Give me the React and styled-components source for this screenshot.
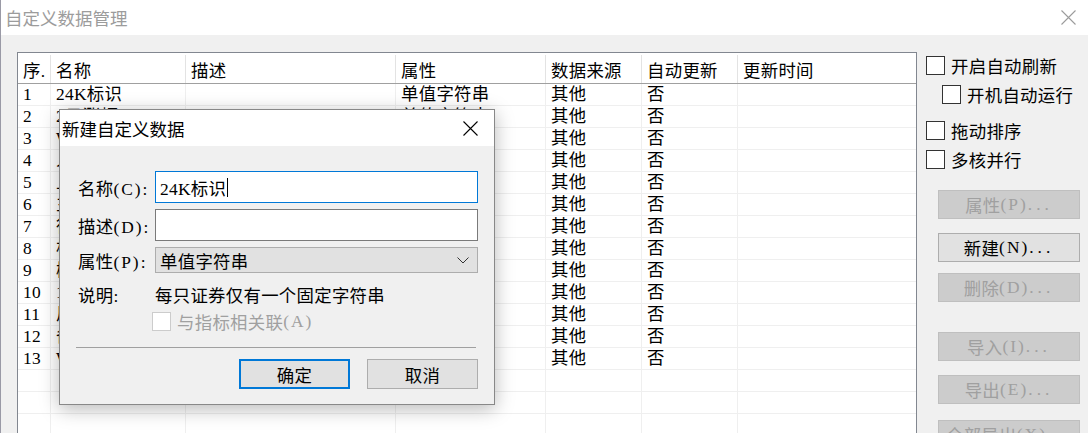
import React from 'react';
import styled, { createGlobalStyle } from 'styled-components';

/* S T Y L E D
* * * * * * */

const GlobalStyle = createGlobalStyle`
    html, body {
        margin: 0;
        padding: 0;
        background: #f0f0f0;
    }

    body {
        font-family: "Liberation Serif", "Noto Sans CJK SC", serif;
        font-size: 17.4px;
        letter-spacing: 0.3px;
        color: #000;
    }
`;

const Window = styled.div`
    position: relative;
    width: 1088px;
    height: 433px;
    overflow: hidden;
    box-sizing: border-box;
    background: #f0f0f0;
    border-left: 1px solid #9a9aa6;
`;

const TitleBar = styled.div`
    display: flex;
    align-items: center;
    justify-content: space-between;
    height: 35px;
    padding: 0 12px 0 4px;
    background: #fff;
    color: #9c9c9c;
    font-family: "Noto Sans CJK SC", sans-serif;
    font-size: 17.5px;
    letter-spacing: 0;
`;

const Main = styled.div`
    display: flex;
    gap: 9px;
    padding: 17px 0 0 16px;
`;

const ListView = styled.div`
    width: 900px;
    height: 400px;
    flex: none;
    box-sizing: border-box;
    border: 1px solid #828790;
    background: #fff;
`;

const columns = '33px 135px 210px 150px 96px 96px 1fr';

const HeaderRow = styled.div`
    display: grid;
    grid-template-columns: ${columns};
    height: 30px;
    border-bottom: 1px solid #a0a0a0;
`;

const HeaderCell = styled.div`
    display: flex;
    align-items: center;
    padding-left: 5px;
    white-space: nowrap;
    overflow: hidden;
    border-right: 1px solid #e3e3e3;
    margin-top: 2px;
    &:last-child { border-right: 0; }
`;

const Row = styled.div`
    display: grid;
    grid-template-columns: ${columns};
    height: 21px;
    border-bottom: 1px solid #efefef;
`;

const Cell = styled.div`
    padding-left: 5px;
    line-height: 21px;
    white-space: nowrap;
    overflow: hidden;
    border-right: 1px solid #efefef;
    &:last-child { border-right: 0; }
`;

// half-width latin marks drawn wider, like the bitmap font of the original
const Punct = styled.span`
    letter-spacing: ${p => p.$wide ? 4 : 2}px;
`;

const SidePanel = styled.div`
    display: flex;
    flex-direction: column;
    flex: 1;
`;

const CheckRow = styled.div`
    display: flex;
    align-items: center;
    height: ${p => p.$height || 26}px;
    margin-top: ${p => p.$top || 0}px;
    padding-left: ${p => p.$indent || 0}px;
    color: ${p => p.$disabled ? '#a0a0a0' : '#000'};
    white-space: nowrap;
`;

const Box = styled.span`
    width: 19px;
    height: 19px;
    flex: none;
    box-sizing: border-box;
    border: 1px solid ${p => p.$disabled ? '#cccccc' : '#333'};
    background: #fff;
    margin-right: 6px;
`;

const SideButton = styled.div`
    display: flex;
    align-items: center;
    justify-content: center;
    width: 142px;
    height: 29px;
    box-sizing: border-box;
    margin: ${p => p.$top}px 0 0 12px;
    border: 1px solid ${p => p.$disabled ? '#bfbfbf' : '#adadad'};
    background: ${p => p.$disabled ? '#cccccc' : '#e1e1e1'};
    color: ${p => p.$disabled ? '#a0a0a0' : '#000'};
    white-space: nowrap;
`;

const Dialog = styled.div`
    position: absolute;
    left: 58px;
    top: 109px;
    width: 436px;
    height: 296px;
    box-sizing: border-box;
    border: 1px solid #888;
    background: #f0f0f0;
    box-shadow: 0 4px 18px rgba(0, 0, 0, 0.28);
`;

const DialogTitle = styled.div`
    display: flex;
    align-items: center;
    justify-content: space-between;
    height: 36px;
    padding: 0 16px 0 2px;
    background: #fff;
    font-family: "Noto Sans CJK SC", sans-serif;
    font-size: 17.5px;
    letter-spacing: 0;
`;

const DialogBody = styled.div`
    display: flex;
    flex-direction: column;
    padding: 25px 16px 0 16px;
`;

const FieldRow = styled.div`
    display: flex;
    align-items: center;
    height: ${p => p.$height}px;
    margin-top: ${p => p.$top || 0}px;
`;

const Label = styled.span`
    width: 77px;
    flex: none;
    padding-left: 2px;
    white-space: nowrap;
`;

const TextBox = styled.div`
    display: flex;
    align-items: center;
    flex: 1;
    height: 100%;
    box-sizing: border-box;
    padding-left: 4px;
    border: 1px solid ${p => p.$focused ? '#0078d7' : '#7a7a7a'};
    background: #fff;
`;

const Caret = styled.span`
    width: 1px;
    height: 19px;
    background: #000;
    margin-left: 1px;
`;

const ComboBox = styled.div`
    display: flex;
    align-items: center;
    justify-content: space-between;
    flex: 1;
    height: 100%;
    box-sizing: border-box;
    padding: 0 8px 0 4px;
    border: 1px solid #adadad;
    background: #e1e1e1;
`;

const CheckIndent = styled.div`
    padding-left: 76px;
`;

const Separator = styled.div`
    height: 1px;
    margin: 15px 2px 0 0;
    background: #a0a0a0;
`;

const ButtonRow = styled.div`
    display: flex;
    justify-content: flex-end;
    gap: 17px;
    margin-top: 11px;
`;

const DialogButton = styled.div`
    display: flex;
    align-items: center;
    justify-content: center;
    width: 111px;
    height: 30px;
    box-sizing: border-box;
    border: ${p => p.$default ? '2px solid #0078d7' : '1px solid #adadad'};
    background: #e1e1e1;
`;

/* D A T A
* * * * */

const headers = ['序.', '名称', '描述', '属性', '数据来源', '自动更新', '更新时间'];

const names = ['24K标识', '2日涨幅', 'WR指标', '人气值', '上市天数', '主力资金', '行业分类',
    '板块标签', '概念题材', '10日均量', '风险提示', '备注', 'WIND代码'];

const rows = names.map((name, i) => [String(i + 1), name, '', '单值字符串', '其他', '否', '']);

const sideButtons = [
    { top: 18, label: '属性', key: 'P', disabled: true },
    { top: 14, label: '新建', key: 'N' },
    { top: 11, label: '删除', key: 'D', disabled: true },
    { top: 30, label: '导入', key: 'I', disabled: true },
    { top: 14, label: '导出', key: 'E', disabled: true },
    { top: 16, label: '全部导出', key: 'X', disabled: true }
];

/* E X P O R T
* * * * * * */

function CloseIcon({ color, size }) {
    return <svg width={size} height={size} viewBox="0 0 15 15">
        <path d="M0.5 0.5 L14.5 14.5 M14.5 0.5 L0.5 14.5" stroke={color} strokeWidth="1.1" fill="none" />
    </svg>;
}

function Mnemonic({ label, hotkey, dots }) {
    return <>
        {label}<Punct>({hotkey})</Punct>{dots ? <Punct $wide>...</Punct> : <Punct>:</Punct>}
    </>;
}

export default function App() {

    return <Window>
        <GlobalStyle />

        <TitleBar>
            <span>自定义数据管理</span>
            <CloseIcon color="#9c9c9c" size={15} />
        </TitleBar>

        <Main>
            <ListView>
                <HeaderRow>
                    {headers.map(h => <HeaderCell key={h}>{h}</HeaderCell>)}
                </HeaderRow>
                {rows.map((r, i) => <Row key={i}>
                    {r.map((c, j) => <Cell key={j}>{c}</Cell>)}
                </Row>)}
                {[0, 1, 2, 3, 4].map(i => <Row key={'e' + i}>
                    {headers.map(h => <Cell key={h} />)}
                </Row>)}
            </ListView>

            <SidePanel>
                <CheckRow><Box />开启自动刷新</CheckRow>
                <CheckRow $top={3} $indent={16}><Box />开机自动运行</CheckRow>
                <CheckRow $top={10}><Box />拖动排序</CheckRow>
                <CheckRow $top={3}><Box />多核并行</CheckRow>
                {sideButtons.map(b => <SideButton key={b.key} $top={b.top} $disabled={b.disabled}>
                    <Mnemonic label={b.label} hotkey={b.key} dots />
                </SideButton>)}
            </SidePanel>
        </Main>

        <Dialog>
            <DialogTitle>
                <span>新建自定义数据</span>
                <CloseIcon color="#000" size={15} />
            </DialogTitle>
            <DialogBody>
                <FieldRow $height={32}>
                    <Label><Mnemonic label="名称" hotkey="C" /></Label>
                    <TextBox $focused>24K标识<Caret /></TextBox>
                </FieldRow>
                <FieldRow $height={32} $top={6}>
                    <Label><Mnemonic label="描述" hotkey="D" /></Label>
                    <TextBox />
                </FieldRow>
                <FieldRow $height={26} $top={6}>
                    <Label><Mnemonic label="属性" hotkey="P" /></Label>
                    <ComboBox>
                        <span>单值字符串</span>
                        <svg width="12" height="7" viewBox="0 0 12 7">
                            <path d="M0.5 0.5 L6 6 L11.5 0.5" stroke="#333" strokeWidth="1" fill="none" />
                        </svg>
                    </ComboBox>
                </FieldRow>
                <FieldRow $height={22} $top={10}>
                    <Label>说明<Punct>:</Punct></Label>
                    <span>每只证券仅有一个固定字符串</span>
                </FieldRow>
                <CheckIndent>
                    <CheckRow $top={5} $height={22} $disabled>
                        <Box $disabled />与指标相关联<Punct>(A)</Punct>
                    </CheckRow>
                </CheckIndent>
                <Separator />
                <ButtonRow>
                    <DialogButton $default>确定</DialogButton>
                    <DialogButton>取消</DialogButton>
                </ButtonRow>
            </DialogBody>
        </Dialog>
    </Window>;

}
